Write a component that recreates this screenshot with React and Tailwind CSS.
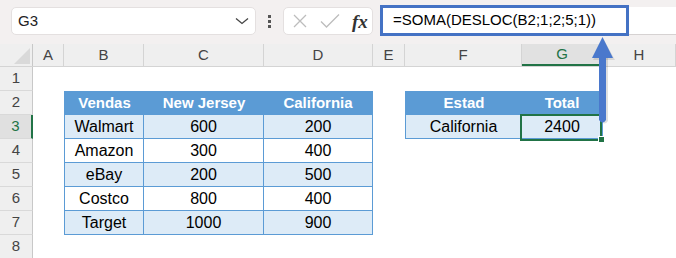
import React from "react";

const COLS = [
  { key: "A", w: "w-[31px]" },
  { key: "B", w: "w-[80px]" },
  { key: "C", w: "w-[120px]" },
  { key: "D", w: "w-[109px]" },
  { key: "E", w: "w-[32px]" },
  { key: "F", w: "w-[117px]" },
  { key: "G", w: "w-[81px]" },
  { key: "H", w: "w-[73px]" },
];

const sales = [
  ["Walmart", "600", "200"],
  ["Amazon", "300", "400"],
  ["eBay", "200", "500"],
  ["Costco", "800", "400"],
  ["Target", "1000", "900"],
];

const blue = "border-[#5b9bd5]";

const cellFor = (row, col) => {
  // table 1: B..D, rows 2..7
  if (row >= 2 && row <= 7 && ["B", "C", "D"].includes(col)) {
    const idx = ["B", "C", "D"].indexOf(col);
    let cls = `border-b ${blue}`;
    if (col === "B") cls += " border-l";
    if (col === "D" || row > 2) cls += " border-r";
    if (row === 2) {
      const head = ["Vendas", "New Jersey", "California"];
      return { cls: `${cls} border-t bg-[#5b9bd5] text-white font-bold text-[15px]`, text: head[idx] };
    }
    const bg = row % 2 === 1 ? "bg-[#ddebf7]" : "bg-white";
    return { cls: `${cls} ${bg} text-black text-[16px]`, text: sales[row - 3][idx] };
  }
  // table 2: F..G, rows 2..3
  if (row >= 2 && row <= 3 && ["F", "G"].includes(col)) {
    let cls = `border-b ${blue}`;
    if (col === "F") cls += " border-l";
    if (col === "G" || row > 2) cls += " border-r";
    if (row === 2) {
      return { cls: `${cls} border-t bg-[#5b9bd5] text-white font-bold text-[15px]`, text: col === "F" ? "Estad" : "Total" };
    }
    return { cls: `${cls} bg-[#ddebf7] text-black text-[16px]`, text: col === "F" ? "California" : "2400" };
  }
  return { cls: "", text: "" };
};

const App = () => {
  return (
    <div className="relative w-[676px] h-[258px] overflow-hidden bg-white font-['Liberation_Sans',Arial,sans-serif]">
      {/* formula bar */}
      <div className="h-[44px] bg-[#f3f0f0] flex items-start pt-[7px]">
        <div className="ml-[11px] w-[245px] h-[28px] bg-white rounded-[5px] border border-[#e4e0e0] flex items-center justify-between pl-[6px] pr-[6px]">
          <span className="text-[15px] text-[#222]">G3</span>
          <svg width="14" height="8" viewBox="0 0 14 8" fill="none" stroke="#444" strokeWidth="1.3">
            <path d="M1 1.5 L7 6.5 L13 1.5" />
          </svg>
        </div>
        <div className="w-[27px] h-[28px] flex flex-col items-center justify-center gap-[2px]">
          <span className="w-[3px] h-[3px] bg-[#555]" />
          <span className="w-[3px] h-[3px] bg-[#555]" />
          <span className="w-[3px] h-[3px] bg-[#555]" />
        </div>
        <div className="w-[90px] h-[28px] bg-white rounded-[5px] border border-[#e4e0e0] flex items-center pl-[8px]">
          <svg width="16" height="16" viewBox="0 0 16 16" stroke="#bdbdbd" strokeWidth="1.3">
            <path d="M2 2 L14 14 M14 2 L2 14" />
          </svg>
          <svg className="ml-[12px]" width="20" height="16" viewBox="0 0 20 16" fill="none" stroke="#bdbdbd" strokeWidth="1.3">
            <path d="M1 8.5 L6.5 14 L19 1.5" />
          </svg>
          <span className="ml-[12px] text-[19px] italic font-bold text-[#333] font-['Liberation_Serif',serif] leading-none">fx</span>
        </div>
        <div className="ml-[8px] flex-1 h-[28px] bg-white border-b border-[#d6d2d2]" />
      </div>
      {/* blue formula highlight */}
      <div className="absolute left-[380px] top-[5px] w-[249px] h-[31px] border-[3px] border-[#4472c4] bg-white flex items-center pl-[10px] text-[15px] text-black">
        =SOMA(DESLOC(B2;1;2;5;1))
      </div>

      {/* column headers */}
      <div className="flex h-[23px] bg-[#efefef] border-b border-[#d4d4d4]">
        <div className="w-[33px] relative border-r border-[#c8c8c8]">
          <svg className="absolute left-0 top-0" width="33" height="23" viewBox="0 0 33 23">
            <polygon points="30,4 30,20 14,20" fill="#d9d9d9" />
          </svg>
        </div>
        {COLS.map((c) => (
          <div
            key={c.key}
            className={`${c.w} flex items-center justify-center text-[15px] border-r border-[#d4d4d4] ${
              c.key === "G" ? "bg-[#e1e1e1] text-[#217346] border-b-2 border-b-[#217346]" : "text-[#444]"
            }`}
          >
            {c.key}
          </div>
        ))}
      </div>

      {/* rows */}
      {[1, 2, 3, 4, 5, 6, 7, 8].map((r) => (
        <div key={r} className="flex h-[24px]">
          <div
            className={`w-[33px] flex items-center justify-center text-[15px] border-b border-[#d9d9d9] ${
              r === 3
                ? "bg-[#e0e0e0] text-[#217346] border-r-2 border-r-[#217346]"
                : "bg-[#efefef] text-[#444] border-r border-r-[#c8c8c8]"
            }`}
          >
            {r}
          </div>
          {COLS.map((c) => {
            const cell = cellFor(r, c.key);
            return (
              <div key={c.key} className={`${c.w} flex items-center justify-center ${cell.cls}`}>
                {cell.text}
              </div>
            );
          })}
        </div>
      ))}

      {/* active cell G3 */}
      <div className="absolute left-[520px] top-[114px] w-[82px] h-[27px] border-2 border-[#217346]" />
      <div className="absolute left-[598px] top-[136px] w-[7px] h-[7px] bg-[#217346] border border-white" />

      {/* arrow */}
      <svg className="absolute left-0 top-0 pointer-events-none" width="676" height="258" viewBox="0 0 676 258">
        <path d="M601 57 L608 57 L608 121 Q604.5 126 601 121 Z" fill="#000" opacity="0.12" />
        <polygon points="604,40 615,60 593,60" fill="#000" opacity="0.1" />
        <path d="M599 56 L606 56 L606 120 Q602.5 125 599 120 Z" fill="#4a78cc" />
        <polygon points="602.5,37 613,58 592,58" fill="#4a78cc" />
      </svg>
    </div>
  );
};

export default App;
